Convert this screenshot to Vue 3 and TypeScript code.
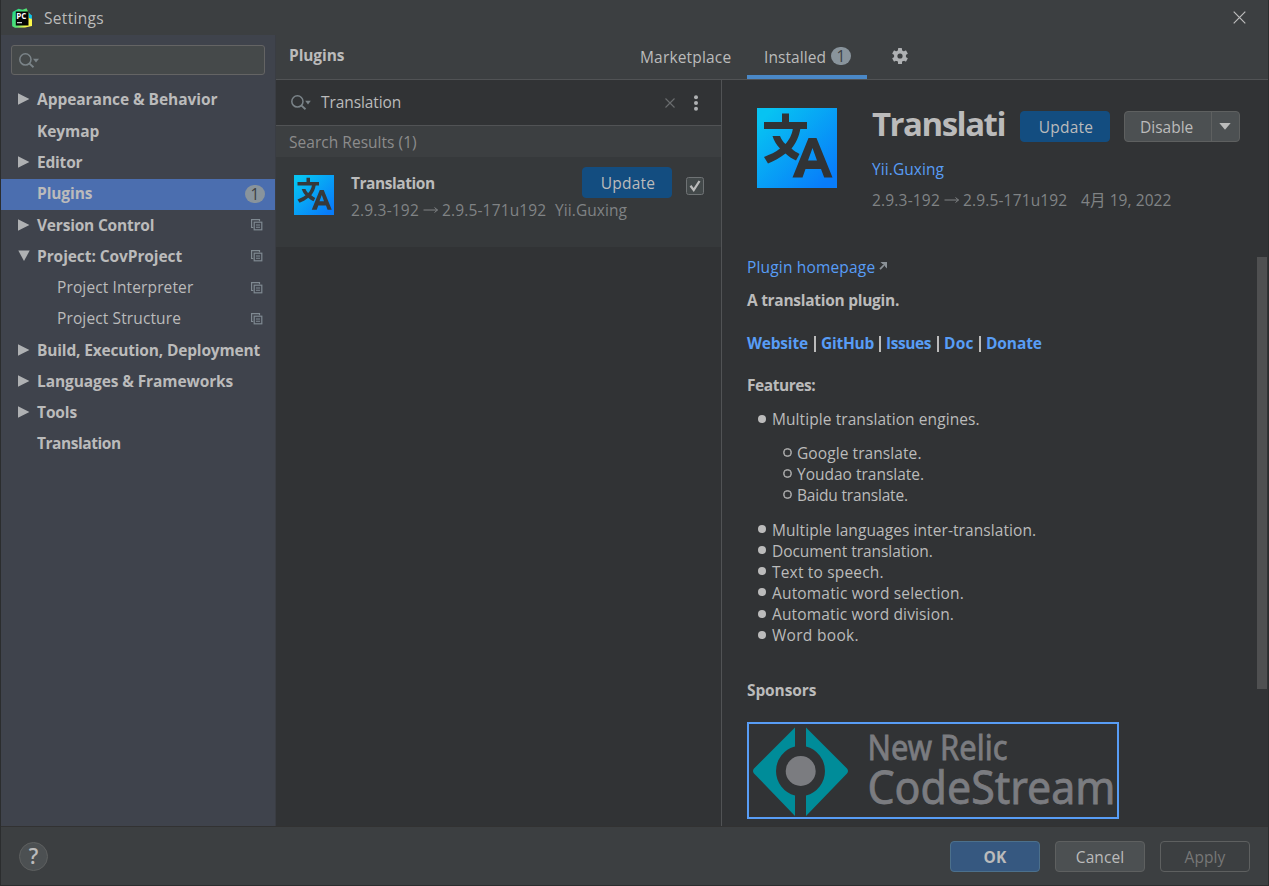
<script setup lang="ts">
interface TreeItem {
  label: string
  arrow?: 'right' | 'down'
  child?: boolean
  copy?: boolean
  selected?: boolean
  cls: string
}

const tree: TreeItem[] = [
  { label: 'Appearance & Behavior', arrow: 'right', cls: 't-appearance' },
  { label: 'Keymap', cls: 't-keymap' },
  { label: 'Editor', arrow: 'right', cls: 't-editor' },
  { label: 'Plugins', selected: true, cls: 't-plugins' },
  { label: 'Version Control', arrow: 'right', copy: true, cls: 't-version' },
  { label: 'Project: CovProject', arrow: 'down', copy: true, cls: 't-project' },
  { label: 'Project Interpreter', child: true, copy: true, cls: 't-interp' },
  { label: 'Project Structure', child: true, copy: true, cls: 't-struct' },
  { label: 'Build, Execution, Deployment', arrow: 'right', cls: 't-build' },
  { label: 'Languages & Frameworks', arrow: 'right', cls: 't-lang' },
  { label: 'Tools', arrow: 'right', cls: 't-tools' },
  { label: 'Translation', cls: 't-trans' },
]

const links: string[] = ['Website', 'GitHub', 'Issues', 'Doc', 'Donate']
const engines: string[] = ['Google translate.', 'Youdao translate.', 'Baidu translate.']
const features: string[] = [
  'Multiple languages inter-translation.',
  'Document translation.',
  'Text to speech.',
  'Automatic word selection.',
  'Automatic word division.',
  'Word book.',
]
</script>

<template>
  <div class="window">
    <header class="titlebar">
      <svg class="app-icon" width="22" height="22" viewBox="0 0 22 22">
        <defs>
          <linearGradient id="pcg" x1="0" y1="0.2" x2="1" y2="0.8">
            <stop offset="0" stop-color="#21d789" />
            <stop offset="0.5" stop-color="#5be572" />
            <stop offset="0.8" stop-color="#fcf84a" />
          </linearGradient>
        </defs>
        <path d="M1.500 5 7.500 1.800l4 1 4-1.500L17 4.500l3 4 1 4.500v6l-7 1.500-10 .3-2.800-1.500L1 13z" fill="url(#pcg)" />
        <path d="M17.500 6 21 8.500 20.500 12 18 11z" fill="#07c3f2" />
        <rect x="4.800" y="4.500" width="12.700" height="14" fill="#050505" />
        <text x="5.300" y="12" font-size="8" font-weight="700" fill="#fff">PC</text>
        <rect x="6" y="15" width="5" height="1.300" fill="#ccc" />
      </svg>
      <span class="title">Settings</span>
      <svg class="close" width="13" height="13" viewBox="0 0 13 13">
        <path d="M.7.7 12.3 12.3M12.3.7.7 12.3" stroke="#bdbdbd" stroke-width="1.2" />
      </svg>
    </header>

    <div class="body">
      <aside class="sidebar">
        <div class="side-search">
          <svg width="20" height="16" viewBox="0 0 20 16">
            <circle cx="6.400" cy="6.400" r="5.600" fill="none" stroke="#7b8489" stroke-width="1.500" />
            <path d="M10.300 10.400 14.500 14.200" stroke="#7b8489" stroke-width="1.900" />
            <path d="M14 5.800h6l-3 3.600z" fill="#7b8489" />
          </svg>
        </div>
        <nav class="tree">
          <div
            v-for="item in tree"
            :key="item.label"
            class="row"
            :class="{ selected: item.selected, child: item.child }"
          >
            <span class="arrow">
              <svg v-if="item.arrow === 'right'" width="12" height="12" viewBox="0 0 12 12">
                <path d="M0 .3 11.4 6 0 11.7z" fill="#afb1b3" />
              </svg>
              <svg v-else-if="item.arrow === 'down'" width="12" height="12" viewBox="0 0 12 12">
                <path d="M.3.6h11.4L6 11z" fill="#afb1b3" />
              </svg>
            </span>
            <span class="label" :class="item.cls">{{ item.label }}</span>
            <svg v-if="item.copy" class="copy" width="12" height="12" viewBox="0 0 12 12">
              <path d="M2.300 8.500H.600V.600h7.900V2.300" fill="none" stroke="#7f8991" stroke-width="1.200" />
              <rect x="3.200" y="3.200" width="7.600" height="7.600" fill="none" stroke="#7f8991" stroke-width="1.200" />
              <path d="M5 6h4M5 8.200h4" stroke="#7f8991" stroke-width="1.100" />
            </svg>
            <span v-if="item.selected" class="count">1</span>
          </div>
        </nav>
      </aside>

      <main class="main">
        <div class="tabs">
          <h1 class="heading">Plugins</h1>
          <span class="tab market">Marketplace</span>
          <span class="tab active">
            <span class="installed">Installed</span>
            <span class="count">1</span>
          </span>
          <svg class="gear" width="16" height="16" viewBox="0 0 16 16">
            <g fill="#afb1b3">
              <rect x="6" y="0" width="4" height="16" rx=".6" />
              <rect x="6" y="0" width="4" height="16" rx=".6" transform="rotate(60 8 8)" />
              <rect x="6" y="0" width="4" height="16" rx=".6" transform="rotate(120 8 8)" />
              <circle cx="8" cy="8" r="6" />
            </g>
            <circle cx="8" cy="8" r="2.600" fill="#3c3f41" />
          </svg>
        </div>

        <div class="columns">
          <section class="list">
            <div class="list-search">
              <svg width="21" height="16" viewBox="0 0 21 16">
                <circle cx="7.400" cy="6.400" r="5.600" fill="none" stroke="#7b8489" stroke-width="1.500" />
                <path d="M11.300 10.400 15.500 14.200" stroke="#7b8489" stroke-width="1.900" />
                <path d="M15.200 5.800h5.600l-2.800 3.600z" fill="#7b8489" />
              </svg>
              <span class="query">Translation</span>
              <svg class="clear" width="10" height="10" viewBox="0 0 10 10">
                <path d="M.5.5l9 9M9.500.500l-9 9" stroke="#6a6d6f" stroke-width="1.100" />
              </svg>
              <svg class="dots" width="4" height="16" viewBox="0 0 4 16">
                <circle cx="2" cy="2.200" r="2" fill="#afb1b3" />
                <circle cx="2" cy="8" r="2" fill="#afb1b3" />
                <circle cx="2" cy="13.800" r="2" fill="#afb1b3" />
              </svg>
            </div>
            <div class="results">Search Results (1)</div>
            <div class="plugin">
              <svg class="plugin-icon" width="40" height="40" viewBox="0 0 80 80">
                <defs>
                  <linearGradient id="tg1" x1="0" y1="0" x2="1" y2="1">
                    <stop offset=".1" stop-color="#07c3f2" />
                    <stop offset=".9" stop-color="#087cfa" />
                  </linearGradient>
                </defs>
                <rect width="80" height="80" fill="url(#tg1)" />
                <g fill="#36393b">
                  <path d="M25 5.500h7V14h18v7H7v-7h18z" />
                  <path d="M36 20h7.500C42 29 39 35 34.500 40.500 37 43 40 44.500 42.500 46L39 52.500C35 50.500 31.500 48.500 28.500 45.500 23 50 17 53 11 55.500L7 49C13 46.500 19 44 23 40.500 19.500 37 17 33 15.500 28h7.500C24.500 31.500 26 34 28.500 36 32 32 35 27 36 20z" />
                  <path fill-rule="evenodd" d="M51.500 30h8L75.500 69.500h-8.300L64 61H48.500l-3 8.500H35.500zM55.500 40 51 52.500h9z" />
                </g>
              </svg>
              <div class="plugin-info">
                <span class="plugin-name">Translation</span>
                <span class="plugin-meta">
                  <span class="ver1">2.9.3-192</span>
                  <svg class="long-arrow" width="16" height="8" viewBox="0 0 16 8">
                    <path d="M.5 4h14M11.500 1.500 14.500 4l-3 2.500" fill="none" stroke="#808385" />
                  </svg>
                  <span class="ver2">2.9.5-171u192</span>
                  <span class="vendor">Yii.Guxing</span>
                </span>
              </div>
              <button class="btn update small"><span>Update</span></button>
              <svg class="check" width="18" height="18" viewBox="0 0 18 18">
                <rect x=".5" y=".5" width="17" height="17" rx="2" fill="#43494a" stroke="#6f7375" />
                <path d="M4.500 8.800 7.700 13 13.500 4" fill="none" stroke="#bbb" stroke-width="2.300" />
              </svg>
            </div>
          </section>

          <section class="detail">
            <div class="hero">
              <svg class="hero-icon" width="80" height="80" viewBox="0 0 80 80">
                <rect width="80" height="80" fill="url(#tg1)" />
                <g fill="#313335">
                  <path d="M25 5.500h7V14h18v7H7v-7h18z" />
                  <path d="M36 20h7.500C42 29 39 35 34.500 40.500 37 43 40 44.500 42.500 46L39 52.500C35 50.500 31.500 48.500 28.500 45.500 23 50 17 53 11 55.500L7 49C13 46.500 19 44 23 40.500 19.500 37 17 33 15.500 28h7.500C24.500 31.500 26 34 28.500 36 32 32 35 27 36 20z" />
                  <path fill-rule="evenodd" d="M51.500 30h8L75.500 69.500h-8.300L64 61H48.500l-3 8.500H35.500zM55.500 40 51 52.500h9z" />
                </g>
              </svg>
              <div class="hero-info">
                <div class="hero-top">
                  <h2 class="name">Translati</h2>
                  <button class="btn update"><span>Update</span></button>
                  <div class="split">
                    <span class="split-main">Disable</span>
                    <span class="split-drop">
                      <svg width="12" height="7" viewBox="0 0 12 7"><path d="M.3 0h11.400L6 6.800z" fill="#bbb" /></svg>
                    </span>
                  </div>
                </div>
                <a class="hero-vendor">Yii.Guxing</a>
                <div class="hero-meta">
                  <span class="ver1">2.9.3-192</span>
                  <svg class="long-arrow" width="16" height="8" viewBox="0 0 16 8">
                    <path d="M.5 4h14M11.500 1.500 14.500 4l-3 2.500" fill="none" stroke="#808385" />
                  </svg>
                  <span class="ver2">2.9.5-171u192</span>
                  <span class="date">4月 19, 2022</span>
                </div>
              </div>
            </div>

            <div class="desc">
              <p class="homepage">
                <a>Plugin homepage</a>
                <svg width="8" height="8" viewBox="0 0 8 8">
                  <path d="M1 7.200 6 2" stroke="#8b9297" stroke-width="1.800" />
                  <path d="M1.500 0H8v6.500L6 4.500V2H3.500z" fill="#8b9297" />
                </svg>
              </p>
              <p class="bold tagline">A translation plugin.</p>
              <p class="bold links">
                <template v-for="(link, i) in links" :key="link">
                  <i v-if="i > 0" class="bar"></i>
                  <a :class="'lk' + i">{{ link }}</a>
                </template>
              </p>
              <p class="bold features">Features:</p>
              <ul class="outer">
                <li>Multiple translation engines.</li>
              </ul>
              <ul class="inner">
                <li v-for="(e, i) in engines" :key="e"><span :class="'en' + i">{{ e }}</span></li>
              </ul>
              <ul class="outer">
                <li v-for="(f, i) in features" :key="f"><span :class="'ft' + i">{{ f }}</span></li>
              </ul>
              <p class="bold sponsors">Sponsors</p>
              <a class="sponsor">
                <svg width="368" height="93" viewBox="0 0 368 93">
                  <g fill="#008c99">
                    <path d="M46 3.500V22.500A25.300 25.300 0 0 0 46 71.500V92L5 49.500Q3 47 5 44.500z" />
                    <path d="M57 3.500V22.500A25.300 25.300 0 0 1 57 71.500V92L98 49.500Q100 47 98 44.500z" />
                  </g>
                  <circle cx="51.700" cy="47" r="15" fill="#7b7c80" />
                  <text class="sp" x="118.500" y="35.500" font-size="34" textLength="140" lengthAdjust="spacingAndGlyphs">New Relic</text>
                  <text class="sp" x="118.500" y="80" font-size="45" textLength="248" lengthAdjust="spacingAndGlyphs">CodeStream</text>
                </svg>
              </a>
            </div>
            <div class="scroll-thumb"></div>
          </section>
        </div>
      </main>
    </div>

    <footer class="footer">
      <span class="help">?</span>
      <button class="btn ok"><span>OK</span></button>
      <button class="btn cancel"><span>Cancel</span></button>
      <button class="btn apply"><span>Apply</span></button>
    </footer>
  </div>
</template>

<style>
html,
body {
  margin: 0;
  background: #2b2b2b;
  overflow: hidden;
}
</style>

<style scoped>
*,
*::before {
  box-sizing: border-box;
}
.window {
  width: 1269px;
  height: 886px;
  border: solid #2b2d2e;
  border-width: 0 1px 1px 1px;
  background: #3c3f41;
  color: #bbbbbb;
  font: 15.5px/21px 'Open Sans', 'Noto Sans', 'Noto Sans CJK SC', sans-serif;
  letter-spacing: 0.08px;
  display: flex;
  flex-direction: column;
  overflow: hidden;
  white-space: nowrap;
}
h1, h2, p, ul {
  margin: 0;
  padding: 0;
}
a {
  color: #589df6;
}
.titlebar {
  height: 35px;
  display: flex;
  align-items: center;
  padding: 0 22.5px 0 10px;
  flex: none;
}
.app-icon {
  letter-spacing: 0;
}
.title {
  margin-left: 11px;
  margin-top: 2px;
  letter-spacing: 0.3px;
}
.close {
  margin-left: auto;
}
.body {
  height: 792px;
  display: flex;
  border-bottom: 1px solid #323232;
  flex: none;
}
.sidebar {
  width: 275px;
  background: #3f434c;
  border-right: 1px solid #3a3d43;
  flex: none;
}
.side-search {
  margin: 10px 10px 0;
  width: 254px;
  height: 30px;
  border: 1px solid #646464;
  border-radius: 3px;
  background: #45494a;
  padding: 7px 0 0 7px;
}
.side-search svg {
  display: block;
}
.tree {
  padding-top: 10.25px;
  width: 274px;
}
.row {
  height: 31.27px;
  display: flex;
  align-items: center;
  padding: 0 10px 1.8px 17px;
  font-weight: 700;
}
.row.selected {
  background: #4b6eaf;
}
.row.child {
  font-weight: 400;
}
.row.child .arrow {
  width: 39px;
}
.arrow {
  width: 19px;
  display: flex;
  flex: none;
}
.arrow svg {
  display: block;
  margin-top: -1px;
}
.t-appearance { letter-spacing: -0.05px; }
.t-keymap { letter-spacing: -0.08px; }
.t-editor { letter-spacing: -0.2px; }
.t-plugins { letter-spacing: -0.1px; }
.t-version { letter-spacing: -0.2px; }
.t-project { letter-spacing: -0.08px; }
.t-interp { letter-spacing: 0.12px; }
.t-struct { letter-spacing: 0.12px; }
.t-build { letter-spacing: -0.17px; }
.t-lang { letter-spacing: -0.1px; }
.t-tools { letter-spacing: -0.1px; }
.t-trans { letter-spacing: -0.45px; }
.copy {
  margin-left: auto;
  margin-right: 2px;
}
.count {
  width: 20px;
  height: 18px;
  border-radius: 9px;
  background: #89949c;
  color: #3c3f41;
  font-weight: 400;
  line-height: 18px;
  text-align: center;
}
.row .count {
  margin-left: auto;
}
.main {
  width: 992px;
  flex: 1;
  display: flex;
  flex-direction: column;
}
.tabs {
  height: 45px;
  border-bottom: 1px solid #515355;
  display: flex;
  flex: none;
}
.heading {
  font-size: 15.5px;
  line-height: 21px;
  letter-spacing: -0.1px;
  width: 351px;
  padding: 10px 0 0 13px;
}
.tab {
  padding-top: 12px;
}
.tab.market {
  width: 120px;
  padding-left: 13px;
  letter-spacing: 0.17px;
}
.tab.active {
  width: 120px;
  border-bottom: 4px solid #4a88c7;
  padding-left: 17px;
  display: flex;
  height: 44px;
}
.tab.active .installed {
  width: 67px;
}
.gear {
  margin: 13px 0 0 25px;
}
.columns {
  flex: 1;
  display: flex;
}
.list {
  width: 446px;
  border-right: 1px solid #515355;
  background: #313335;
}
.list-search {
  height: 46px;
  border-bottom: 1px solid #515355;
  display: flex;
  align-items: center;
  padding: 0 23px 0 14px;
}
.query {
  margin-left: 10px;
  letter-spacing: -0.08px;
}
.clear {
  margin-left: auto;
}
.dots {
  margin-left: 19px;
}
.results {
  height: 31px;
  background: #3c3f41;
  color: #8c8c8c;
  letter-spacing: 0.03px;
  padding: 6px 0 0 13px;
}
.plugin {
  height: 90px;
  background: #36393b;
  display: flex;
  align-items: flex-start;
  padding-left: 18px;
}
.plugin-icon {
  margin-top: 18px;
  flex: none;
}
.plugin-info {
  display: flex;
  flex-direction: column;
  width: 231px;
  flex: none;
  margin-left: 17px;
  padding-top: 16px;
}
.plugin-name {
  font-weight: 700;
  letter-spacing: -0.45px;
}
.plugin-meta,
.hero-meta {
  display: flex;
  color: #808385;
}
.plugin-meta {
  margin-top: 6px;
}
.ver1 {
  width: 72px;
  flex: none;
  letter-spacing: 0.18px;
}
.ver2 {
  width: 104px;
  flex: none;
  letter-spacing: 0.15px;
}
.long-arrow {
  margin-top: 6px;
  width: 16px;
  margin-right: 3px;
  flex: none;
}
.vendor {
  margin-left: 9px;
}
.btn {
  font: inherit;
  letter-spacing: inherit;
  color: #bbbbbb;
  border: 1px solid #5e6060;
  border-radius: 4px;
  background: #4c5052;
  height: 30.5px;
  width: 90px;
  padding: 2px 0 0;
  line-height: 21px;
}
.btn.update {
  background: #134d80;
  border-color: #134d80;
  letter-spacing: 0.25px;
  padding-left: 2px;
  flex: none;
}
.btn.small {
  margin-top: 10px;
}
.check {
  margin: 20px 0 0 14px;
}
.detail {
  flex: 1;
  background: #313335;
  position: relative;
  padding-left: 25px;
}
.hero {
  display: flex;
  padding: 28px 0 0 10px;
  height: 177px;
}
.hero-icon {
  flex: none;
}
.hero-info {
  margin-left: 35px;
}
.hero-top {
  display: flex;
  align-items: flex-start;
  margin-top: 3px;
  height: 48px;
}
.name {
  font-size: 33px;
  line-height: 26px;
  width: 148px;
  font-weight: 700;
  letter-spacing: -1.5px;
}
.split {
  display: flex;
  width: 116px;
  height: 30.5px;
  border: 1px solid #5e6060;
  border-radius: 4px;
  background: #4c5052;
  margin-left: 14px;
}
.split-main {
  width: 87px;
  padding: 5px 0 0 15px;
  letter-spacing: 0;
  border-right: 1px solid #5e6060;
}
.split-drop {
  flex: 1;
  padding: 11px 0 0 7px;
  display: flex;
}
.hero-vendor {
  display: block;
}
.hero-meta {
  margin-top: 10px;
}
.date {
  margin-left: 14px;
}
.homepage {
  display: flex;
  letter-spacing: 0.17px;
}
.homepage svg {
  margin: 5px 0 0 4px;
}
.bold {
  font-weight: 700;
}
.tagline {
  margin-top: 12px;
  letter-spacing: -0.28px;
}
.links {
  margin-top: 22px;
  display: flex;
  height: 21px;
  letter-spacing: -0.1px;
}
.lk0 { width: 67px; letter-spacing: -0.2px; }
.lk1 { width: 58px; letter-spacing: -0.25px; }
.lk2 { width: 51px; letter-spacing: -0.45px; }
.lk3 { width: 35px; letter-spacing: 0.2px; }
.bar {
  width: 2px;
  height: 16px;
  margin: 3px 5px 0 0;
  background: #bbbbbb;
}
.features {
  margin-top: 21px;
  letter-spacing: -0.45px;
}
ul {
  list-style: none;
}
.outer {
  padding-left: 25px;
  margin-top: 13px;
}
.outer li,
.inner li {
  height: 21.15px;
  position: relative;
}
.outer li::before {
  content: '';
  position: absolute;
  left: -14px;
  top: 5.5px;
  width: 8px;
  height: 8px;
  border-radius: 50%;
  background: #bbbbbb;
}
.inner {
  padding-left: 50px;
  margin-top: 13px;
}
.inner li::before {
  content: '';
  position: absolute;
  left: -14px;
  top: 5px;
  width: 9px;
  height: 9px;
  border-radius: 50%;
  border: 1.6px solid #bbbbbb;
  box-shadow: inset 0 0 0 0.5px #bbbbbb;
}
.en1 { letter-spacing: 0; }
.en2 { letter-spacing: -0.18px; }
.ft1 { letter-spacing: -0.05px; }
.ft2 { letter-spacing: 0.18px; }
.ft3 { letter-spacing: 0.17px; }
.ft4 { letter-spacing: 0.15px; }
.ft5 { letter-spacing: 0.3px; }
.sponsors {
  margin-top: 33.6px;
  letter-spacing: -0.12px;
}
.sponsor {
  display: block;
  margin-top: 20.5px;
  width: 372px;
  height: 97px;
  border: 2px solid #589df6;
}
.sponsor svg {
  display: block;
}
.sp {
  font-family: 'Noto Sans', sans-serif;
  letter-spacing: 0;
  fill: #7b7c80;
  stroke: #7b7c80;
  stroke-width: 0.8px;
}
.scroll-thumb {
  position: absolute;
  right: 1px;
  top: 177px;
  width: 10px;
  height: 432px;
  background: #4f5051;
}
.footer {
  flex: 1;
  display: flex;
  align-items: flex-start;
  padding: 14px 18px 0 18px;
}
.help {
  width: 29px;
  height: 29px;
  border-radius: 50%;
  border: 1px solid #5e6060;
  background: #4c5052;
  font-size: 21px;
  font-weight: 600;
  line-height: 27px;
  text-align: center;
  margin-top: 1px;
  margin-right: auto;
}
.btn.ok {
  background: #365880;
  border-color: #4c708c;
  font-weight: 700;
}
.btn.cancel,
.btn.apply {
  margin-left: 15px;
}
.btn.apply {
  background: transparent;
  color: #777777;
}
</style>
